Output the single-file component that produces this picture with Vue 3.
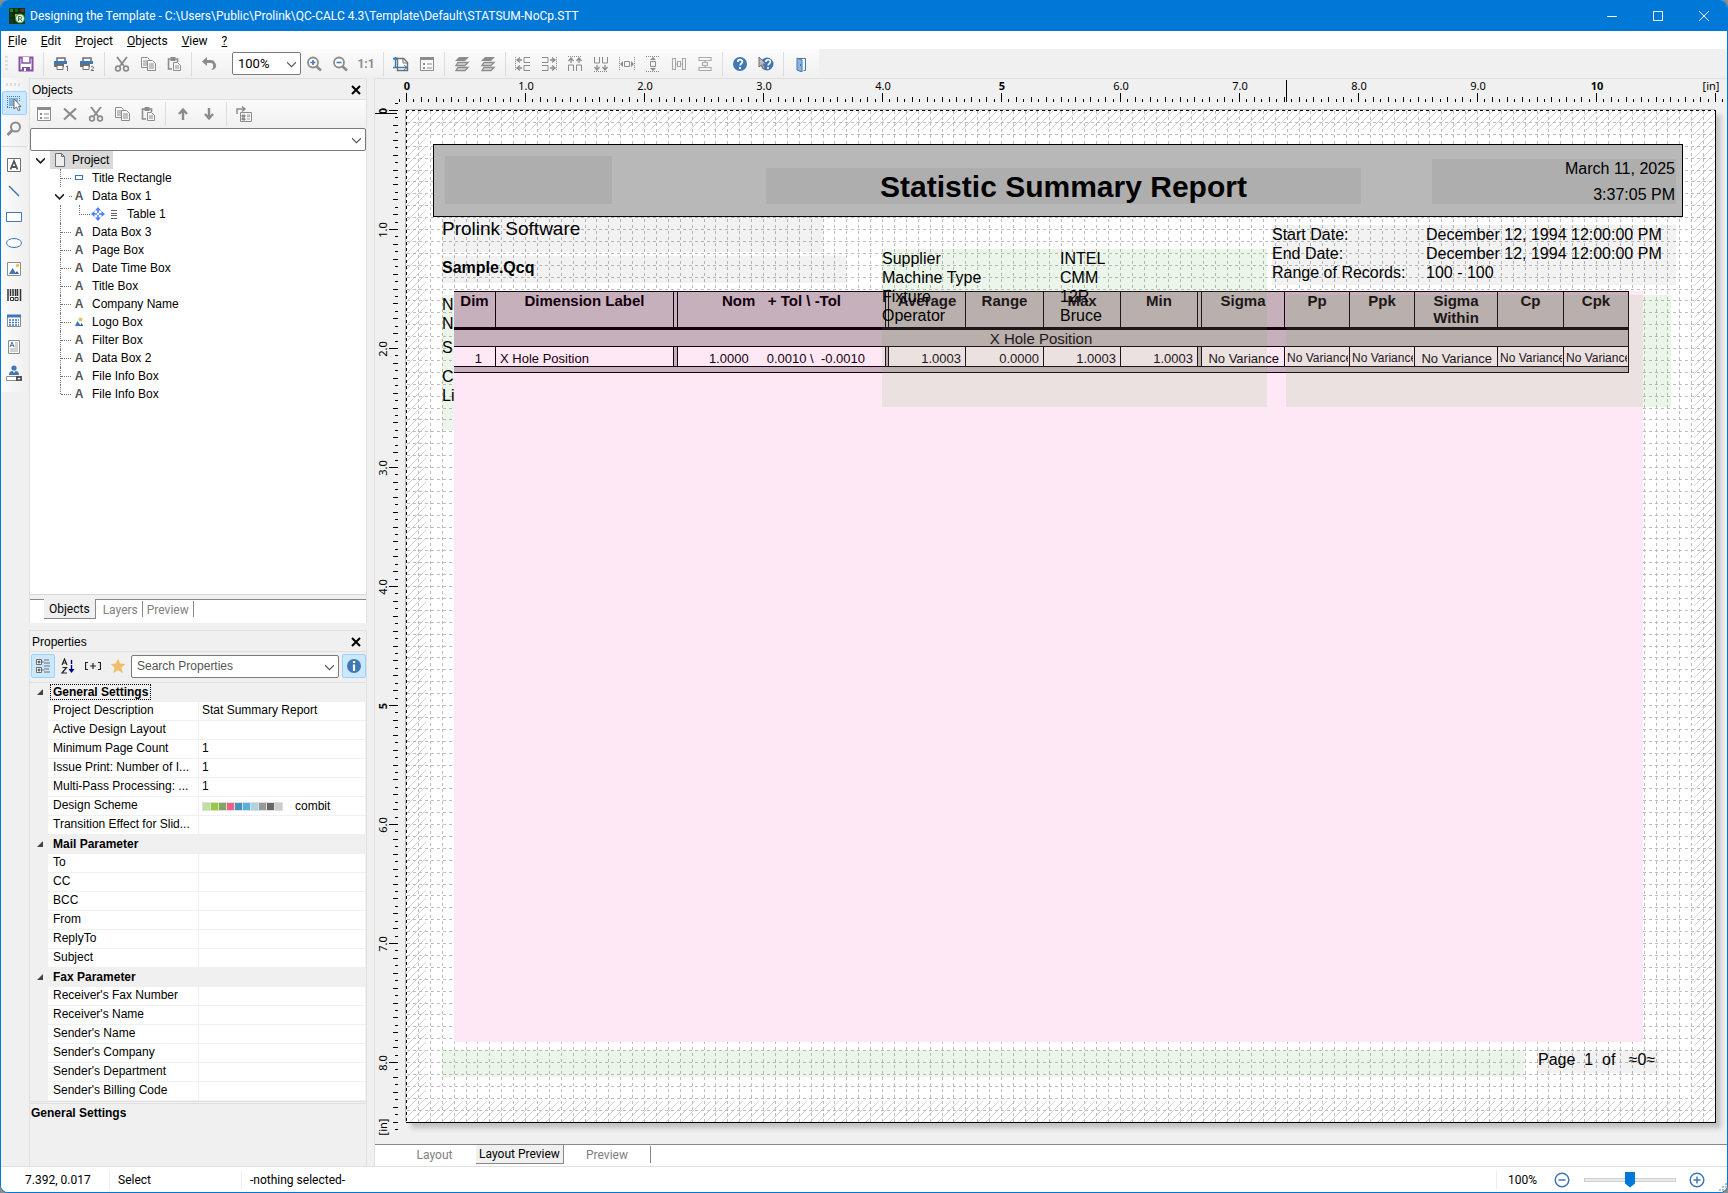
<script setup>
import { ref } from 'vue'

const G = '#8c8c8c'
const D = '#6e6e6e'
const B = '#3f78b5'

const icons = {
  logo: `<rect width="16" height="16" fill="#123d12"/><path d="M0 5h16M0 10h16M5 0v16M10 0v16" stroke="#0a240a"/><rect x="1" y="1" width="3" height="3" fill="#2f7a2a"/><rect x="12" y="1" width="3" height="3" fill="#7a2a1c"/><rect x="6" y="1" width="3" height="3" fill="#1d5a1d"/><rect x="6" y="6" width="3" height="3" fill="#b7a431"/><circle cx="11" cy="10.500" r="4.500" fill="#e9f4e6" stroke="#2d8a35"/><path d="M9.500 13V8.500h2a1.200 1.200 0 0 1 0 2.400h-2m1.600 0L13 13" stroke="#2d7a32" fill="none"/>`,
  save: `<path d="M1.500 1.500h13v13h-13z" fill="#fff" stroke="#8450a4" stroke-width="2"/><path d="M4 1v6h8V1" fill="#fff" stroke="#8450a4" stroke-width="1.500"/><path d="M4 11h8v4H4z" fill="#8450a4"/><path d="M6 12h2v3H6z" fill="#fff"/>`,
  print1: `<path d="M4 5V2h8v3" fill="none" stroke="${D}" stroke-width="1.500"/><path d="M1 5h13v3H1z" fill="${B}"/><path d="M1 8h10v3H1z" fill="${D}"/><path d="M4 9.500h6v4H4z" fill="#fff" stroke="${D}"/><path d="M13 11l1.500-1v5" fill="none" stroke="${D}"/>`,
  print2: `<path d="M4 5V2h8v3" fill="none" stroke="${D}" stroke-width="1.500"/><path d="M1 5h13v3H1z" fill="${B}"/><path d="M1 8h10v3H1z" fill="${D}"/><path d="M4 9.500h6v4H4z" fill="#fff" stroke="${D}"/><path d="M12 11q1.500-1.500 2.500 0 0 1.500-2.500 3.500h3" fill="none" stroke="${D}"/>`,
  cut: `<path d="M3 1l7 9M13 1L6 10" stroke="${G}" stroke-width="2" fill="none"/><circle cx="4" cy="12.500" r="2.400" fill="none" stroke="${G}" stroke-width="1.600"/><circle cx="12" cy="12.500" r="2.400" fill="none" stroke="${G}" stroke-width="1.600"/>`,
  copy: `<path d="M1.500 1.500h6l2 2v8h-8z" fill="#f8f8f8" stroke="${G}"/><path d="M3 5h4M3 7h4M3 9h4" stroke="${G}"/><path d="M7.500 4.500h5l3 3v7h-8z" fill="#f8f8f8" stroke="${G}"/><path d="M9 8h5M9 10h5M9 12h5" stroke="${G}"/>`,
  paste: `<path d="M6 13H2.500V3h9v3" fill="none" stroke="${G}" stroke-width="1.600"/><path d="M4.500 1h5v4h-5z" fill="${G}"/><path d="M7.500 6.500h4l3 3v5h-7z" fill="#f8f8f8" stroke="${G}"/><path d="M9 10h4M9 12h4" stroke="${G}"/>`,
  undo: `<path d="M6 1L1 5.500 6 10V7h4c3 0 3 5 0 7 5-.500 6-4 4.500-6.500C13.500 5 12 4 10 4H6z" fill="${G}"/>`,
  zoomin: `<circle cx="7" cy="6.500" r="5" fill="#fff" stroke="${G}" stroke-width="1.800"/><path d="M10.500 10.500l4.500 4" stroke="${G}" stroke-width="2.600"/><path d="M4.500 6.500h5M7 4v5" stroke="${B}" stroke-width="1.600"/>`,
  zoomout: `<circle cx="7" cy="6.500" r="5" fill="#fff" stroke="${G}" stroke-width="1.800"/><path d="M10.500 10.500l4.500 4" stroke="${G}" stroke-width="2.600"/><path d="M4.500 6.500h5" stroke="${B}" stroke-width="1.600"/>`,
  pagesize: `<path d="M4.500 2.500h6l4 4v8h-10z" fill="#fff" stroke="${D}" stroke-width="1.400"/><path d="M10 2.500v4.500h4.500" fill="none" stroke="${D}"/><path d="M2.500 1v11M0 2.500h5M0 11.500h14" stroke="${B}" stroke-width="1.400"/><path d="M11 9l3 2.500-3 2.500M1 4l1.500-3L4 4" fill="none" stroke="${B}"/>`,
  props: `<path d="M1.500 1.500h13v13h-13z" fill="#fafafa" stroke="${G}"/><path d="M1 1h14v3H1z" fill="${G}"/><path d="M4 7h2v2H4zM4 11h2v2H4z" fill="${G}"/><path d="M8 8h5M8 12h5" stroke="${G}"/>`,
  layers: `<path d="M5 1h10l-4 4H1z" fill="${G}"/><path d="M4 6.500h10l-3 3H2zM4 11.500h10l-3 3H2z" fill="#ddd" stroke="${G}" stroke-width="1.300"/>`,
  alignL: `<path d="M.500 1v14" stroke="${G}" stroke-dasharray="1 1"/><path d="M2 4h5M2 12h5M5 1.500L2 4l3 2.500M5 9.500L2 12l3 2.500" stroke="${G}" fill="none" stroke-width="1.300"/><path d="M15 1.500H9v5h6M15 9.500H9v5h6" stroke="${G}" fill="none"/>`,
  alignR: `<path d="M15.500 1v14" stroke="${G}" stroke-dasharray="1 1"/><path d="M9 12h5M11 9.500l3 2.500-3 2.500M9 4h5M11 1.500L14 4l-3 2.500" stroke="${G}" fill="none" stroke-width="1.300"/><path d="M1 1.500h6v5H1M1 9.500h6v5H1" stroke="${G}" fill="none"/>`,
  alignT: `<path d="M1 .500h14" stroke="${G}" stroke-dasharray="1 1"/><path d="M4 2v5M12 2v5M1.500 5L4 2l2.500 3M9.500 5L12 2l2.500 3" stroke="${G}" fill="none" stroke-width="1.300"/><path d="M1.500 15V9h5v6M9.500 15V9h5v6" stroke="${G}" fill="none"/>`,
  alignB: `<path d="M1 15.500h14" stroke="${G}" stroke-dasharray="1 1"/><path d="M4 9v5M12 9v5M1.500 11L4 14l2.500-3M9.500 11l2.500 3 2.500-3" stroke="${G}" fill="none" stroke-width="1.300"/><path d="M1.500 1v6h5V1M9.500 1v6h5V1" stroke="${G}" fill="none"/>`,
  centerH: `<path d="M.500 1v14M15.500 1v14" stroke="${G}" stroke-dasharray="1 1"/><path d="M5.500 5.500h5v5h-5z" stroke="${G}" fill="none"/><path d="M1 8l3-3v6zM15 8l-3-3v6z" fill="${G}"/>`,
  centerV: `<path d="M1 .500h14M1 15.500h14" stroke="${G}" stroke-dasharray="1 1"/><path d="M5.500 5.500h5v5h-5z" stroke="${G}" fill="none"/><path d="M8 1l3 3H5zM8 15l3-3H5z" fill="${G}"/>`,
  distH: `<path d="M1.500 2v12M14.500 2v12M1.500 2.500h3v11h-3M14.500 2.500h-3v11h3M6.500 5.500h3v5h-3zM4 8h2M10 8h2" stroke="#a8a8a8" stroke-width="1.100" fill="none"/>`,
  distV: `<path d="M2 1.500h12v3H2zM2 11.500h12v3H2zM5.500 6.500h5v3h-5zM8 4v2M8 10v2" stroke="#a8a8a8" stroke-width="1.100" fill="none"/>`,
  help: `<circle cx="8" cy="8" r="7" fill="${B}"/><path d="M5.800 6c0-3 4.600-3 4.600-.200 0 1.800-2.300 1.700-2.300 3.700M8 11v2" stroke="#fff" stroke-width="1.800" fill="none"/>`,
  context: `<circle cx="9" cy="8" r="6.500" fill="${B}"/><path d="M7.800 6c0-3 4.600-3 4.600-.200 0 1.800-2.300 1.700-2.300 3.700M10 11v2" stroke="#fff" stroke-width="1.600" fill="none"/><path d="M1 1v10l2.500-2 2 4 1.500-1-2-4h3z" fill="#bbb" stroke="${D}"/>`,
  door: `<path d="M4.500 2.500h8v12h-2" fill="none" stroke="${B}"/><path d="M4 2l5 2v12l-5-2z" fill="#8fb4da" stroke="${B}"/><path d="M7.500 8v2" stroke="${B}"/>`,
  remove: `<path d="M2 2.500l12 11M14 2.500L2 13.500" stroke="${G}" stroke-width="2.200"/>`,
  up: `<path d="M8 14V5M4 8l4-4.500L12 8" stroke="${G}" stroke-width="2.400" fill="none"/>`,
  down: `<path d="M8 2v9M4 8l4 4.500L12 8" stroke="${G}" stroke-width="2.400" fill="none"/>`,
  tree: `<path d="M4.500 15.500v-9h11v9z" fill="#f5f5f5" stroke="${G}"/><path d="M6 9h3v2H6zM6 12h3v2H6zM11 9h3M11 10.500h3M11 13h3" fill="${G}" stroke="${G}" stroke-width=".800"/><path d="M1 8V3h7M6 .500L9 3 6 5.500" fill="none" stroke="${G}" stroke-width="1.500"/>`,
  select: `<path d="M1 1.500h13M1 12.500h7M1.500 1v12M13.500 1v5" stroke="${B}" stroke-dasharray="1 1"/><path d="M3 4h9M3 6h9M3 8h5M3 10h5" stroke="${B}" stroke-width="1.200"/><path d="M8 4v10l2.500-2 2 4 1.500-1-1.500-3.500H15z" fill="#fff" stroke="${D}"/>`,
  lens: `<circle cx="9.500" cy="6" r="4.500" fill="none" stroke="${G}" stroke-width="2"/><path d="M6 9.500L1.500 14" stroke="${G}" stroke-width="2.800"/>`,
  text: `<path d="M1.500 1.500h13v13h-13z" fill="#fff" stroke="${D}"/><path d="M4.500 12.500L8 4l3.500 8.500M5.500 10h5" fill="none" stroke="#555" stroke-width="1.800"/>`,
  line: `<path d="M3 3l10 10" stroke="${B}" stroke-width="1.500"/>`,
  rect: `<path d="M.500 3.500h15v9H.500z" fill="#fff" stroke="${B}"/>`,
  ellipse: `<ellipse cx="8" cy="8" rx="7.500" ry="4.500" fill="#fff" stroke="${B}"/>`,
  image: `<path d="M1.500 1.500h13v13h-13z" fill="#fff" stroke="${G}"/><path d="M3 13l3.500-6 4 6z" fill="${B}"/><path d="M9 13l2-3 2 3z" fill="#2f5f94"/><circle cx="11.500" cy="4.500" r="1.800" fill="#efc069"/>`,
  barcode: `<path d="M2 2v12M4.500 2v7M7 2v7M9.500 2v7M11.500 2v7M14.500 2v12" stroke="#333" stroke-width="1.500"/><path d="M4.500 10.500h3v3h-3zM9 10.500h3v3H9z" fill="none" stroke="#333"/>`,
  table: `<path d="M1.500 2.500h13v11h-13z" fill="#fff" stroke="${G}"/><path d="M1 1.500h14v3H1z" fill="${B}"/><path d="M3 7h10M3 9.500h10M3 12h10" stroke="${B}" stroke-width="1.300" stroke-dasharray="2 1"/>`,
  rich: `<path d="M2.500 1.500h11v13h-11z" fill="#fff" stroke="${G}"/><path d="M4 8l2-5 2 5M4.500 6.500h3" stroke="${B}" fill="none"/><path d="M9 4h3M9 6h3M9 8h3M4 10h8M4 12h8" stroke="${G}" stroke-width=".800"/>`,
  user: `<circle cx="8" cy="3" r="2.600" fill="${B}"/><path d="M3 10q0-4 3.500-4L8 8l1.500-2Q13 6 13 10z" fill="${B}"/><path d="M.500 11.500h10v4H.500z" fill="#fff" stroke="${G}"/><path d="M10 11h6v5h-6z" fill="#555"/><path d="M11.500 13h3L13 15z" fill="#fff"/>`,
  doc: `<path d="M3.500 1.500h6l3 3v10h-9z" fill="#eee" stroke="${D}"/><path d="M9.500 1.500v3h3" fill="none" stroke="${D}"/>`,
  smallrect: `<path d="M4.500 5.500h7v4h-7z" fill="#fff" stroke="${B}" stroke-width="1.200"/>`,
  smallimage: `<path d="M4 12l2.500-5L10 12z" fill="${B}"/><path d="M9 12l1.500-3 1.800 3z" fill="#2f5f94"/><circle cx="9.500" cy="5.500" r="2" fill="#efc069"/>`,
  move: `<path d="M8 1L5 4.500h6zM8 15l-3-3.500h6zM1 8l3.500-3v6zM15 8l-3.500-3v6z" fill="#4a7dff"/><path d="M8 4v3M8 9v3M4 8h3M9 8h3" stroke="#4a7dff" stroke-width="1.600"/>`,
  list: `<path d="M5 4.500h6M5 7.500h6M5 9.500h6M5 12.500h6" stroke="#666"/>`,
  group: `<path d="M1.500 1.500h5v5h-5zM1.500 9.500h5v5h-5z" fill="#fff" stroke="${D}"/><path d="M2.500 4h3M4 2.500v3M2.500 12h3M4 10.500v3" stroke="#333"/><path d="M9 2h5M9 5h6M9 8h6M9 11h5M9 14h6M7 4h2M7 12h2" stroke="${D}"/>`,
  sort: `<path d="M2 7l2.500-6L7 7M3 5h3M2.500 9.500h4L2 15h5" fill="none" stroke="#222" stroke-width="1.200"/><path d="M11.500 2v10" stroke="#00008b" stroke-width="1.400" stroke-dasharray="4 1"/><path d="M8.500 11h6L11.500 15z" fill="#00008b"/>`,
  expand: `<path d="M3 4.500H.500v7H3M13 4.500h2.500v7H13M5 8h6M8 5v6" fill="none" stroke="#222" stroke-width="1.200"/>`,
  star: `<path d="M8 .500l2.200 5 5.300.500-4 3.600 1.200 5.400L8 12.200 3.300 15l1.200-5.400L.500 6l5.300-.500z" fill="#efc069"/>`,
  info: `<circle cx="8" cy="8" r="7" fill="${B}"/><path d="M8 3v2M8 6.500V13" stroke="#fff" stroke-width="2.200"/>`,
  minus: `<circle cx="8" cy="8" r="6.800" fill="#fff" stroke="${B}" stroke-width="1.500"/><path d="M4.500 8h7" stroke="${B}" stroke-width="1.500"/>`,
  plus: `<circle cx="8" cy="8" r="6.800" fill="#fff" stroke="${B}" stroke-width="1.500"/><path d="M4.500 8h7M8 4.500v7" stroke="${B}" stroke-width="1.500"/>`
}

const menus = [['F', 'ile'], ['E', 'dit'], ['P', 'roject'], ['O', 'bjects'], ['V', 'iew'], ['?', '']]
const toolbarStart = [['save'], ['print1', 'print2'], ['cut', 'copy', 'paste'], ['undo']]
const toolbarEnd = [
  ['pagesize', 'props'],
  ['layers', 'layers'],
  ['alignL', 'alignR', 'alignT', 'alignB', 'centerH', 'centerV', 'distH', 'distV'],
  ['help', 'context'],
  ['door']
]
const objectTools = [['props', 'remove', 'cut', 'copy', 'paste'], ['up', 'down'], ['tree']]
const drawTools = ['text', 'line', 'rect', 'ellipse', 'image', 'barcode', 'table', 'rich', 'user']

const nodes = [
  { label: 'Title Rectangle', icon: 'smallrect' },
  { label: 'Data Box 1', open: true },
  { label: 'Table 1', nested: true },
  { label: 'Data Box 3' },
  { label: 'Page Box' },
  { label: 'Date Time Box' },
  { label: 'Title Box' },
  { label: 'Company Name' },
  { label: 'Logo Box', icon: 'smallimage' },
  { label: 'Filter Box' },
  { label: 'Data Box 2' },
  { label: 'File Info Box' },
  { label: 'File Info Box', last: true }
]

const swatches = ['#bfe0a0', '#97c93d', '#84a660', '#ec5f87', '#4394bd', '#58b1dc', '#acd5e4', '#999999', '#666666', '#cccccc']
const groups = [
  {
    name: 'General Settings',
    focus: true,
    rows: [
      ['Project Description', 'Stat Summary Report'],
      ['Active Design Layout', ''],
      ['Minimum Page Count', '1'],
      ['Issue Print: Number of I...', '1'],
      ['Multi-Pass Processing: ...', '1'],
      ['Design Scheme', 'combit'],
      ['Transition Effect for Slid...', '']
    ]
  },
  { name: 'Mail Parameter', rows: ['To', 'CC', 'BCC', 'From', 'ReplyTo', 'Subject'].map(n => [n, '']) },
  {
    name: 'Fax Parameter',
    rows: ["Receiver's Fax Number", "Receiver's Name", "Sender's Name", "Sender's Company", "Sender's Department", "Sender's Billing Code"].map(n => [n, ''])
  }
]

const INCH = 119
const at = n => Math.round(n * INCH)
const ticks = count => Array.from({ length: count + 2 }, (_, i) => {
  const k = i - 1
  return { pos: at(k / 16) + 0.5, size: k % 16 === 0 ? 9 : k % 2 === 0 ? 5 : 3 }
})
const hTicks = ticks(177)
const vTicks = ticks(137)
const unit = n => (n % 5 === 0 ? String(n) : n + '.0')
const labels = Array.from({ length: 11 }, (_, n) => ({ pos: at(n) + 1, text: unit(n), strong: n % 5 === 0 }))
const gridX = Array.from({ length: 109 }, (_, i) => at((i + 1) / 10) + 0.5)
const gridY = Array.from({ length: 84 }, (_, i) => at((i + 1) / 10) + 0.5)

const columns = [42, 178, 4, 208, 3, 77, 78, 77, 77, 4, 83, 65, 65, 83, 66, 65]
const tolHead = 'Nom   + Tol \\ -Tol'
const tolValue = '1.0000     0.0010 \\  -0.0010'
const pageText = 'Page  1  of   ≈0≈'
const zoom = ref(50)
const search = ref('')
</script>

<template>
  <div class="window">
    <header class="titlebar">
      <svg class="ico" viewBox="0 0 16 16" v-html="icons.logo" />
      <h1>Designing the Template - C:\Users\Public\Prolink\QC-CALC 4.3\Template\Default\STATSUM-NoCp.STT</h1>
      <button aria-label="Minimize"><svg class="cap" viewBox="0 0 10 10"><path d="M0 5.500h10" /></svg></button>
      <button aria-label="Maximize"><svg class="cap" viewBox="0 0 10 10"><path d="M.5 .5h9v9h-9z" /></svg></button>
      <button aria-label="Close"><svg class="cap" viewBox="0 0 10 10"><path d="M0 0l10 10M10 0L0 10" /></svg></button>
    </header>

    <nav class="menubar">
      <button v-for="m in menus" :key="m[0]"><u>{{ m[0] }}</u>{{ m[1] }}</button>
    </nav>

    <div class="toolrow">
      <div class="toolbar main">
        <i class="grip" />
        <div v-for="(set, i) in toolbarStart" :key="i" class="set">
          <button v-for="name in set" :key="name" class="tool" :aria-label="name"><svg class="ico" viewBox="0 0 16 16" v-html="icons[name]" /></button>
        </div>
        <div class="combo zoom">
          <select aria-label="Zoom"><option>100%</option></select>
          <svg viewBox="0 0 8 6"><path d="M0 1l4 4 4-4" /></svg>
        </div>
        <div class="set first">
          <button class="tool" aria-label="Zoom in"><svg class="ico" viewBox="0 0 16 16" v-html="icons.zoomin" /></button>
          <button class="tool" aria-label="Zoom out"><svg class="ico" viewBox="0 0 16 16" v-html="icons.zoomout" /></button>
          <button class="tool ratio">1:1</button>
        </div>
        <div v-for="(set, i) in toolbarEnd" :key="'e' + i" class="set ruled">
          <button v-for="(name, j) in set" :key="j" class="tool" :aria-label="name"><svg class="ico" viewBox="0 0 16 16" v-html="icons[name]" /></button>
        </div>
      </div>
    </div>

    <div class="workspace">
      <aside class="palette">
        <div class="toolbar vertical">
          <i class="grip" />
          <button class="tool active" aria-label="Select"><svg class="ico" viewBox="0 0 16 16" v-html="icons.select" /></button>
          <button class="tool" aria-label="Zoom"><svg class="ico" viewBox="0 0 16 16" v-html="icons.lens" /></button>
          <hr>
          <button v-for="name in drawTools" :key="name" class="tool" :aria-label="name"><svg class="ico" viewBox="0 0 16 16" v-html="icons[name]" /></button>
        </div>
      </aside>

      <div class="dock">
        <section class="panel objects">
          <div class="panel-head">
            <h2>Objects</h2>
            <button aria-label="Close objects"><svg viewBox="0 0 10 10"><path d="M1 1l8 8M9 1L1 9" /></svg></button>
          </div>
          <div class="toolbar">
            <div v-for="(set, i) in objectTools" :key="i" class="set">
              <button v-for="name in set" :key="name" class="tool" :aria-label="name"><svg class="ico" viewBox="0 0 16 16" v-html="icons[name]" /></button>
            </div>
          </div>
          <div class="combo">
            <select aria-label="Object filter"><option></option></select>
            <svg viewBox="0 0 8 6"><path d="M0 1l4 4 4-4" /></svg>
          </div>
          <ul class="tree">
            <li class="root">
              <svg class="chev" viewBox="0 0 8 6"><path d="M0 1l4 4 4-4" /></svg>
              <span class="chosen"><svg class="ico" viewBox="0 0 16 16" v-html="icons.doc" />Project</span>
            </li>
            <li v-for="(n, i) in nodes" :key="i">
              <span class="guide" :class="{ last: n.last, open: n.open, nested: n.nested }">
                <svg v-if="n.open" class="chev" viewBox="0 0 8 6"><path d="M0 1l4 4 4-4" /></svg>
              </span>
              <template v-if="n.nested">
                <i class="branch" />
                <svg class="ico" viewBox="0 0 16 16" v-html="icons.move" />
                <svg class="ico" viewBox="0 0 16 16" v-html="icons.list" />
              </template>
              <svg v-else-if="n.icon" class="ico" viewBox="0 0 16 16" v-html="icons[n.icon]" />
              <b v-else class="letter">A</b>
              <span class="label">{{ n.label }}</span>
            </li>
          </ul>
          <div class="tabs">
            <button class="on">Objects</button>
            <button>Layers</button>
            <button>Preview</button>
          </div>
        </section>

        <section class="panel">
          <div class="panel-head">
            <h2>Properties</h2>
            <button aria-label="Close properties"><svg viewBox="0 0 10 10"><path d="M1 1l8 8M9 1L1 9" /></svg></button>
          </div>
          <div class="propbar">
            <button class="tool active" aria-label="Categorized"><svg class="ico" viewBox="0 0 16 16" v-html="icons.group" /></button>
            <button class="tool" aria-label="Alphabetical"><svg class="ico" viewBox="0 0 16 16" v-html="icons.sort" /></button>
            <button class="tool" aria-label="Expand all"><svg class="ico" viewBox="0 0 16 16" v-html="icons.expand" /></button>
            <button class="tool fav" aria-label="Favorites"><svg class="ico" viewBox="0 0 16 16" v-html="icons.star" /></button>
            <div class="combo search">
              <input v-model="search" aria-label="Search Properties" placeholder="Search Properties">
              <svg viewBox="0 0 8 6"><path d="M0 1l4 4 4-4" /></svg>
            </div>
            <button class="tool active" aria-label="Info"><svg class="ico" viewBox="0 0 16 16" v-html="icons.info" /></button>
          </div>
          <table class="props">
            <colgroup><col class="c0"><col class="c1"><col></colgroup>
            <tbody v-for="g in groups" :key="g.name">
              <tr class="cat">
                <td><svg viewBox="0 0 6 6"><path d="M6 0v6H0z" /></svg></td>
                <th colspan="2"><span :class="{ focus: g.focus }">{{ g.name }}</span></th>
              </tr>
              <tr v-for="r in g.rows" :key="r[0]">
                <td class="gutter" />
                <td>{{ r[0] }}</td>
                <td class="value">
                  <span v-if="r[1] === 'combit'" class="scheme"><span class="swatches"><i v-for="c in swatches" :key="c" :style="{ background: c }" /></span>combit</span>
                  <template v-else>{{ r[1] }}</template>
                </td>
              </tr>
            </tbody>
          </table>
          <p class="describe">General Settings</p>
        </section>
      </div>

      <main class="design">
        <div class="board">
          <svg class="hruler">
            <path v-for="t in hTicks" :key="t.pos" :d="`M${t.pos} 23v-${t.size}`" />
            <path d="M880.5 1v22" />
            <text v-for="l in labels" :key="l.text" :x="l.pos" y="11" :class="{ strong: l.strong }">{{ l.text }}</text>
            <text x="1305" y="11">[in]</text>
          </svg>
          <svg class="vruler">
            <path v-for="t in vTicks" :key="t.pos" :d="`M23 ${t.pos}h-${t.size}`" />
            <path d="M0 3.500h22" />
            <g v-for="l in labels.slice(0, 9)" :key="l.text" :transform="`translate(12 ${l.pos}) rotate(-90)`">
              <text :class="{ strong: l.strong }">{{ l.text }}</text>
            </g>
            <g transform="translate(12 1017) rotate(-90)"><text>[in]</text></g>
          </svg>

          <div class="page">
            <svg class="grid">
              <defs>
                <pattern id="hatch" width="8" height="8" patternUnits="userSpaceOnUse">
                  <path d="M-1 9L9-1M-1 1L1-1M7 9L9 7" stroke="#c8c8c8" stroke-width=".8" />
                </pattern>
              </defs>
              <path class="margin" d="M0 0h1310v1013H0zM20 20v971h1268V20z" fill="url(#hatch)" fill-rule="evenodd" />
              <path v-for="x in gridX" :key="'x' + x" class="gl" :d="`M${x} 1v1012`" />
              <path v-for="y in gridY" :key="'y' + y" class="gl" :d="`M1 ${y}h1308`" />
              <path class="edge" d="M.5 0v1013M0 .5h1310" />
            </svg>

            <div class="item titlerect" />
            <div class="item veil logobox" />
            <div class="item veil titlebox">Statistic Summary Report</div>
            <div class="item veil datetime"><span>March 11, 2025</span><span>3:37:05 PM</span></div>
            <div class="item veil company">Prolink Software</div>
            <div class="item veil fileinfo">Sample.Qcq</div>
            <dl class="item veil range">
              <dt>Start Date:</dt><dd>December 12, 1994 12:00:00 PM</dd>
              <dt>End Date:</dt><dd>December 12, 1994 12:00:00 PM</dd>
              <dt>Range of Records:</dt><dd>100 - 100</dd>
            </dl>
            <div class="item green filter"><span>N</span><span>N</span><span class="g5">S</span><span class="g10">C</span><span>Li</span></div>

            <div class="item tablebox">
              <table class="stats">
                <colgroup><col v-for="(w, i) in columns" :key="i" :style="{ width: w + 'px' }"></colgroup>
                <thead>
                  <tr>
                    <th>Dim</th><th>Dimension Label</th><th /><th>{{ tolHead }}</th><th />
                    <th>Average</th><th>Range</th><th>Max</th><th>Min</th><th />
                    <th>Sigma</th><th>Pp</th><th>Ppk</th><th>Sigma<br>Within</th><th>Cp</th><th>Cpk</th>
                  </tr>
                </thead>
                <tbody>
                  <tr class="grouprow"><td colspan="16">X Hole Position</td></tr>
                  <tr class="data">
                    <td class="dim">1</td><td class="name">X Hole Position</td><td class="sep" />
                    <td class="nom">{{ tolValue }}</td><td class="sep" />
                    <td>1.0003</td><td>0.0000</td><td>1.0003</td><td>1.0003</td><td class="sep" />
                    <td class="wide">No Variance</td><td class="tight"><span>No Variance</span></td><td class="tight"><span>No Variance</span></td>
                    <td class="wide">No Variance</td><td class="tight"><span>No Variance</span></td><td class="tight"><span>No Variance</span></td>
                  </tr>
                  <tr class="foot"><td colspan="16" /></tr>
                </tbody>
              </table>
            </div>

            <dl class="item green machine">
              <dt>Supplier</dt><dd>INTEL</dd>
              <dt>Machine Type</dt><dd>CMM</dd>
              <dt>Fixture</dt><dd>12R</dd>
              <dt>Operator</dt><dd>Bruce</dd>
            </dl>
            <div class="item green extra" />
            <div class="item green footer" />
            <div class="item veil pagebox">{{ pageText }}</div>
          </div>
        </div>

        <div class="viewtabs">
          <button>Layout</button>
          <button class="on">Layout Preview</button>
          <button>Preview</button>
        </div>
      </main>
    </div>

    <footer class="status">
      <span class="pos">7.392, 0.017</span>
      <span class="mode">Select</span>
      <span class="sel">-nothing selected-</span>
      <span class="pct">100%</span>
      <button aria-label="Zoom out"><svg class="ico" viewBox="0 0 16 16" v-html="icons.minus" /></button>
      <input v-model="zoom" type="range" min="0" max="100" aria-label="Zoom level">
      <button aria-label="Zoom in"><svg class="ico" viewBox="0 0 16 16" v-html="icons.plus" /></button>
      <svg class="sizer" viewBox="0 0 9 9"><path d="M7 0h2v2H7zM7 3h2v2H7zM4 3h2v2H4zM7 6h2v2H7zM4 6h2v2H4zM1 6h2v2H1z" /></svg>
    </footer>
  </div>
</template>

<style>
body {
  margin: 0;
  background: #8e8e88;
}
</style>

<style scoped>
* {
  box-sizing: border-box;
}
.window {
  display: flex;
  flex-direction: column;
  min-height: 100vh;
  border: 1px solid #0078d7;
  border-top: 0;
  border-radius: 8px;
  overflow: hidden;
  background: #f0f0f0;
  color: #000;
  font: 12px/18px "Liberation Sans", Arial, sans-serif;
}
button {
  border: 0;
  padding: 0;
  background: none;
  font: inherit;
  color: inherit;
}
h1, h2, p, ul, dl, dd {
  margin: 0;
  padding: 0;
}
.ico {
  width: 16px;
  height: 16px;
  flex: none;
  display: block;
}
.titlebar {
  display: flex;
  align-items: center;
  height: 31px;
  padding-left: 8px;
  background: #0078d7;
  color: #fff;
}
.titlebar h1 {
  flex: 1;
  margin-left: 5px;
  font: 12px/18px Roboto, sans-serif;
}
.titlebar button {
  width: 46px;
  height: 31px;
  display: grid;
  place-items: center;
}
.cap {
  width: 10px;
  height: 10px;
  fill: none;
  stroke: #fff;
}
.menubar {
  display: flex;
  gap: 14px;
  height: 18px;
  padding: 1px 0 0 7px;
  background: #fff;
  font: 12px/18px Roboto, sans-serif;
}
.toolrow {
  display: flex;
  height: 29px;
  background: #f0f0f0;
}
.toolbar {
  display: flex;
  align-items: center;
  height: 29px;
  background: linear-gradient(#fbfbfb, #f0f0f0);
}
.toolbar.main {
  padding: 0 5px 0 4px;
}
.grip {
  width: 3px;
  height: 16px;
  margin-right: 5px;
  background: repeating-linear-gradient(#ddd 0 2px, transparent 2px 4px);
}
.set {
  display: flex;
}
.set + .set, .set.ruled {
  margin-left: 4px;
  padding-left: 4px;
  border-left: 1px solid #dcdcdc;
}
.tool {
  width: 26px;
  height: 24px;
  display: grid;
  place-items: center;
}
.tool.active {
  border: 1px solid #99d1ff;
  border-radius: 2px;
  background: #cce8ff;
}
.ratio {
  color: #8c8c8c;
  font: bold 12px/18px Roboto, sans-serif;
}
.combo {
  position: relative;
  display: flex;
  height: 23px;
  border: 1px solid #7a7a7a;
  border-radius: 2px;
  background: #fff;
}
.combo select, .combo input {
  appearance: none;
  width: 100%;
  border: 0;
  padding: 0 5px;
  background: none;
  outline: 0;
  color: #000;
  font: 12px/20px "Liberation Sans", Arial, sans-serif;
}
.combo input::placeholder {
  color: #555;
  opacity: 1;
}
.combo svg {
  position: absolute;
  right: 4px;
  top: 8px;
  width: 9px;
  height: 7px;
  fill: none;
  stroke: #555;
  pointer-events: none;
}
.combo.zoom {
  width: 69px;
  margin-left: 10px;
}
.combo.zoom select {
  font: 13px/20px Roboto, sans-serif;
}
.workspace {
  flex: 1;
  display: flex;
}
.palette {
  width: 28px;
}
.toolbar.vertical {
  flex-direction: column;
  width: 26px;
  height: auto;
  padding: 5px 0 6px;
  background: linear-gradient(90deg, #fbfbfb, #f0f0f0);
}
.vertical .grip {
  width: 16px;
  height: 3px;
  margin: 0 0 5px;
  background: repeating-linear-gradient(90deg, #ddd 0 2px, transparent 2px 4px);
}
.vertical .tool {
  height: 26px;
}
.vertical .tool.active {
  width: 25px;
  height: 24px;
  margin: 0 0 1px;
}
.vertical hr {
  width: 26px;
  margin: 4px 0 5px;
  border: 0;
  border-top: 1px solid #dcdcdc;
}
.dock {
  display: flex;
  flex-direction: column;
  gap: 7px;
  width: 338px;
}
.panel {
  border: 1px solid #e0e0e0;
  border-bottom: 0;
}
.panel.objects {
  flex: 1;
  display: flex;
  flex-direction: column;
}
.panel-head {
  display: flex;
  align-items: center;
  height: 21px;
  padding: 2px 5px 0 2px;
  border-bottom: 1px solid #e0e0e0;
}
.panel-head h2 {
  flex: 1;
  font: 12px/18px "Liberation Sans", Arial, sans-serif;
}
.panel-head svg {
  display: block;
  width: 10px;
  height: 10px;
  fill: none;
  stroke: #000;
  stroke-width: 2;
}
.objects .toolbar {
  height: 28px;
  padding-left: 1px;
}
.tree {
  flex: 1;
  background: #fff;
  border-bottom: 1px solid #d8d8d8;
  list-style: none;
}
.tree li {
  display: flex;
  align-items: center;
  height: 18px;
}
.chev {
  width: 9px;
  height: 7px;
  fill: none;
  stroke: #222;
  stroke-width: 1.5;
}
.root .chev {
  margin: 0 11px 0 6px;
}
.chosen {
  display: flex;
  align-items: center;
  height: 18px;
  margin-left: -6px;
  padding: 0 4px 0 2px;
  background: #d9d9d9;
}
.chosen .ico {
  margin-right: 4px;
}
.guide {
  position: relative;
  width: 11px;
  height: 18px;
  margin-left: 30px;
  border-left: 1px dotted #777;
}
.guide::after {
  content: "";
  position: absolute;
  left: 0;
  top: 9px;
  width: 10px;
  border-top: 1px dotted #777;
}
.guide.last {
  height: 9px;
  align-self: flex-start;
}
.guide.open {
  border-color: transparent;
}
.guide.open::after {
  left: 8px;
  width: 3px;
}
.guide.open .chev {
  position: absolute;
  left: -6px;
  top: 6px;
}
.guide.nested::after {
  display: none;
}
.branch {
  width: 11px;
  height: 10px;
  align-self: flex-start;
  margin-left: 8px;
  border: 1px dotted #777;
  border-width: 0 0 1px 1px;
}
.letter {
  width: 16px;
  text-align: center;
  color: #555;
}
.label {
  margin-left: 5px;
}
.tabs {
  display: flex;
  height: 28px;
  padding: 0 0 4px 14px;
  border-top: 4px solid #f0f0f0;
  background: linear-gradient(#888 0 1px, #fff 1px);
  color: #808080;
  font: 12px/18px Roboto, sans-serif;
}
.tabs button {
  margin: 2px 0;
  padding: 0 4px;
  border-right: 1px solid #888;
}
.tabs .on, .viewtabs .on {
  margin: 0;
  border: 1px solid #888;
  border-width: 0 1px 1px 0;
  background: #f0f0f0;
  color: #000;
}
.tabs .on {
  padding: 0 5px;
}
.tabs .on + button {
  padding-left: 7px;
}
.propbar {
  display: flex;
  align-items: center;
  height: 31px;
  padding: 0 0 2px 1px;
  border-bottom: 1px solid #e0e0e0;
}
.propbar .tool {
  width: 25px;
}
.propbar .tool.active {
  flex: none;
  width: 24px;
}
.fav {
  margin-right: 1px;
}
.combo.search {
  flex: 1;
  margin-right: 3px;
}
.props {
  width: 100%;
  table-layout: fixed;
  border-collapse: separate;
  border-spacing: 0;
  background: #fff;
}
.c0 {
  width: 18px;
}
.c1 {
  width: 151px;
}
.props td, .props th {
  height: 19px;
  padding: 0 3px 0 5px;
  border-bottom: 1px solid #f0f0f0;
  line-height: 16px;
  white-space: nowrap;
  text-align: left;
  vertical-align: top;
}
.props td + td {
  border-right: 1px solid #f0f0f0;
}
.props .value {
  padding-left: 3px;
}
.props .cat td, .props .cat th, .props .gutter {
  background: #f0f0f0;
}
.props .cat th {
  line-height: 18px;
}
.cat td svg {
  display: block;
  width: 6px;
  height: 6px;
  margin: 6px 0 0 2px;
  fill: #444;
}
.focus {
  outline: 1px dotted #000;
  outline-offset: -1px;
  padding: 1px 3px;
  margin-left: -3px;
}
.scheme {
  display: flex;
  align-items: center;
  height: 18px;
}
.swatches {
  display: flex;
  gap: 1px;
  margin-right: 12px;
  padding: 1px;
  background: #ddd;
}
.swatches i {
  width: 7px;
  height: 7px;
}
.describe {
  height: 65px;
  border-top: 3px double #e0e0e0;
  padding-left: 1px;
  font-weight: bold;
}
.design {
  flex: 1;
  display: flex;
  flex-direction: column;
  margin-left: 7px;
  border: 1px solid #e0e0e0;
  border-width: 1px 0 0 1px;
}
.board {
  flex: 1;
  display: grid;
  grid-template: 31px auto / 31px auto;
  justify-content: start;
  align-content: start;
}
.hruler {
  grid-column: 2;
  width: 100%;
  height: 31px;
  overflow: visible;
}
.vruler {
  grid-row: 2;
  width: 31px;
  height: 100%;
  overflow: visible;
}
.hruler path, .vruler path {
  stroke: #000;
}
.board text {
  font: 11px "Noto Sans", sans-serif;
  text-anchor: middle;
}
.board text.strong {
  font-weight: bold;
}
.page {
  position: relative;
  width: 1310px;
  height: 1013px;
  background: #fff;
  border: 1px solid #000;
  border-width: 0 1px 1px 0;
  box-shadow: 5px 5px 5px rgba(0, 0, 0, .2), -1px -1px 0 #b8b8b8;
  font: 16px/19px "Liberation Sans", Arial, sans-serif;
}
.grid {
  position: absolute;
  width: 100%;
  height: 100%;
}
.gl {
  stroke: #bdbdbd;
  stroke-dasharray: 3 3;
}
.edge {
  stroke: #000;
  stroke-dasharray: 3 3;
}
.item {
  position: absolute;
  white-space: pre;
}
.veil {
  background: rgba(0, 0, 0, .05);
}
.green {
  background: rgba(101, 178, 93, .13);
}
.titlerect {
  left: 27px;
  top: 34px;
  width: 1250px;
  height: 73px;
  border: 1px solid #000;
  background: #b8b8b8;
}
.logobox {
  left: 39px;
  top: 46px;
  width: 167px;
  height: 48px;
}
.titlebox {
  left: 360px;
  top: 58px;
  width: 595px;
  height: 36px;
  text-align: center;
  font-weight: bold;
  font-size: 30px;
  line-height: 37px;
}
.datetime {
  left: 1026px;
  top: 49px;
  width: 244px;
  height: 45px;
  display: flex;
  flex-direction: column;
  align-items: flex-end;
  gap: 6px;
  padding-right: 1px;
  line-height: 20px;
}
.company {
  left: 36px;
  top: 107px;
  width: 381px;
  height: 35px;
  font-size: 19px;
  line-height: 23px;
}
.fileinfo {
  left: 36px;
  top: 146px;
  width: 404px;
  height: 27px;
  font-weight: bold;
  line-height: 23px;
}
.range, .machine {
  display: grid;
  align-content: start;
}
.range {
  left: 866px;
  top: 115px;
  width: 404px;
  height: 60px;
  grid-template-columns: 154px 1fr;
}
.filter {
  left: 36px;
  top: 185px;
  width: 200px;
  height: 135px;
  display: flex;
  flex-direction: column;
}
.g5 {
  margin-top: 5px;
}
.g10 {
  margin-top: 10px;
}
.tablebox {
  left: 48px;
  top: 181px;
  width: 1189px;
  height: 751px;
  background: #ffe8f5;
}
.machine {
  left: 476px;
  top: 139px;
  width: 385px;
  height: 158px;
  grid-template-columns: 178px 1fr;
}
.extra {
  left: 880px;
  top: 185px;
  width: 385px;
  height: 112px;
}
.footer {
  left: 36px;
  top: 940px;
  width: 1082px;
  height: 27px;
}
.pagebox {
  left: 1131px;
  top: 940px;
  width: 122px;
  height: 23px;
  padding-left: 1px;
}
.stats {
  width: 1175px;
  table-layout: fixed;
  border-collapse: separate;
  border-spacing: 0;
  border-top: 1px solid #14000e;
  color: #14000e;
}
.stats th, .stats td {
  padding: 0;
  border-right: 1px solid #14000e;
  border-bottom: 1px solid #14000e;
  white-space: pre;
  vertical-align: top;
}
.stats th {
  height: 38px;
  border-bottom-width: 3px;
  background: #c6b0bb;
  font-size: 15px;
  line-height: 17px;
}
.stats .grouprow td {
  height: 17px;
  padding-top: 2px;
  background: #c6b0bb;
  font-size: 15px;
  line-height: 14px;
  text-align: center;
}
.stats .data td {
  height: 20px;
  padding: 4px 4px 0 0;
  font-size: 13px;
  line-height: 15px;
  text-align: right;
}
.stats .data .dim {
  padding-right: 13px;
}
.stats .data .name {
  padding-left: 4px;
  text-align: left;
}
.stats .data .nom {
  padding-right: 20px;
}
.stats .data .sep, .stats .foot td {
  padding: 0;
  background: #c6b0bb;
}
.stats .data .wide {
  padding-right: 5px;
}
.stats .data .tight {
  padding: 4px 1px 0 2px;
  font-size: 12px;
  text-align: left;
}
.tight span {
  display: block;
  overflow: hidden;
}
.stats .foot td {
  height: 6px;
}
.viewtabs {
  display: flex;
  height: 22px;
  border-top: 1px solid #888;
  background: #fff;
  color: #808080;
  font: 12px/18px Roboto, sans-serif;
}
.viewtabs button {
  width: 87px;
  margin: 1px 0 3px;
  border-right: 1px solid #888;
}
.viewtabs button:first-child {
  width: 101px;
  padding-left: 18px;
  border: 0;
}
.viewtabs .on {
  width: 88px;
  margin: 0 0 2px;
}
.status {
  position: relative;
  display: flex;
  align-items: center;
  height: 26px;
  padding-right: 22px;
  border-top: 1px solid #e0e0e0;
  background: #fff;
  font: 12px/18px Roboto, sans-serif;
}
.pos {
  width: 109px;
  padding-left: 24px;
  border-right: 1px solid #eee;
}
.mode {
  width: 132px;
  padding-left: 8px;
  border-right: 1px solid #eee;
}
.sel {
  flex: 1;
  padding-left: 8px;
}
.pct {
  width: 58px;
  padding-left: 11px;
  border-left: 1px solid #eee;
}
.status input {
  appearance: none;
  width: 92px;
  height: 18px;
  margin: 0 13px 0 14px;
  background: none;
}
.status input::-webkit-slider-runnable-track {
  height: 4px;
  border: 1px solid #d0d0d0;
  background: #e7eaea;
}
.status input::-webkit-slider-thumb {
  appearance: none;
  width: 10px;
  height: 16px;
  margin-top: -7px;
  background: #0078d7;
  clip-path: polygon(0 0, 100% 0, 100% 75%, 50% 100%, 0 75%);
}
.sizer {
  position: absolute;
  right: 0;
  bottom: 0;
  width: 9px;
  height: 9px;
  fill: #bbb;
}
</style>
